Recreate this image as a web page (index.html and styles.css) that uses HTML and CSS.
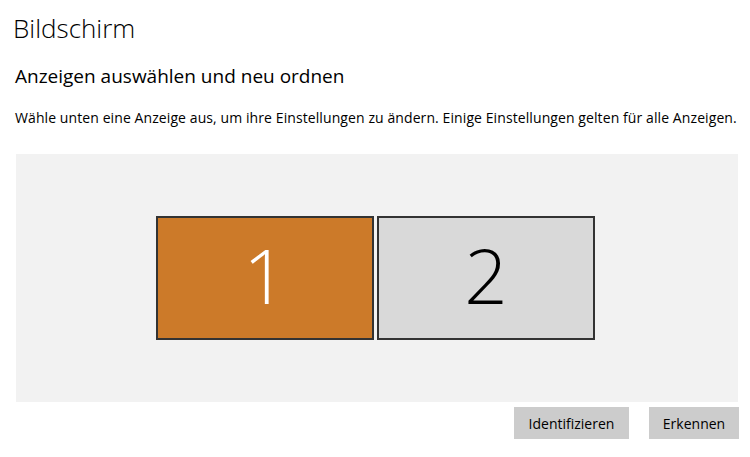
FILE: index.html
```html
<!DOCTYPE html>
<html lang="de">
<head>
<meta charset="utf-8">
<link rel="stylesheet" href="styles.css">
</head>
<body>
<main class="page">
  <h1 class="title">Bildschirm</h1>
  <h2 class="subtitle">Anzeigen auswählen und neu ordnen</h2>
  <p class="desc">Wähle unten eine Anzeige aus, um ihre Einstellungen zu ändern. Einige Einstellungen gelten für alle Anzeigen.</p>
  <div class="canvas">
    <div class="monitors">
      <div class="monitor selected">1</div>
      <div class="monitor">2</div>
    </div>
  </div>
  <div class="actions">
    <button class="btn btn-identify">Identifizieren</button>
    <button class="btn btn-detect">Erkennen</button>
  </div>
</main>
</body>
</html>
```
FILE: styles.css
```css
html, body {
  margin: 0;
  padding: 0;
  background: #ffffff;
}
body {
  font-family: "Open Sans", "Noto Sans", "Liberation Sans", sans-serif;
  color: #000;
}
.page {
  padding: 0 12px 0 16px;
  width: 722px;
}
.title {
  margin: 0;
  padding-top: 10px;
  margin-left: -3px;
  font-size: 26px;
  font-weight: 300;
  line-height: 36px;
}
.subtitle {
  margin: 17px 0 0 -1px;
  font-size: 19px;
  font-weight: 400;
  line-height: 26px;
}
.desc {
  margin: 19px 0 0 -1px;
  font-size: 14px;
  line-height: 20px;
  letter-spacing: 0.09px;
  white-space: nowrap;
}
.canvas {
  margin-top: 26px;
  width: 722px;
  height: 248px;
  background: #f2f2f2;
  display: flex;
  align-items: center;
  justify-content: center;
}
.monitors {
  display: flex;
  gap: 3px;
  margin-left: -3px;
}
.monitor {
  box-sizing: border-box;
  width: 218px;
  height: 124px;
  border: 2px solid #333333;
  background: #d9d9d9;
  display: flex;
  align-items: center;
  justify-content: center;
  font-size: 76px;
  font-weight: 300;
  line-height: 1;
  color: #000;
  padding-bottom: 6px;
}
.monitor.selected {
  background: #cc7a29;
  color: #ffffff;
}
.actions {
  display: flex;
  justify-content: flex-end;
  gap: 20px;
  margin-top: 5px;
  margin-right: -1px;
}
.btn {
  border: 0;
  background: #cccccc;
  font-family: inherit;
  font-size: 14px;
  color: #000;
  height: 32px;
  padding: 0;
}
.btn-identify { width: 115px; }
.btn-detect { width: 90px; }
```
